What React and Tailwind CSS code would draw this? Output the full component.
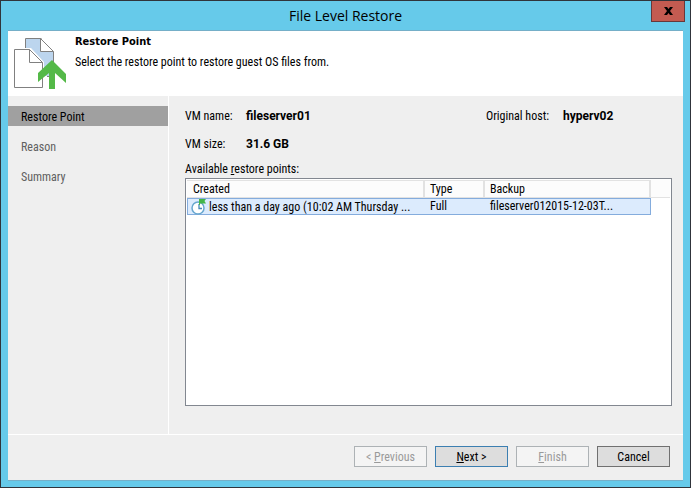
import React from "react";

const steps = ["Restore Point", "Reason", "Summary"];

const restorePoints = [
  {
    created: "less than a day ago (10:02 AM Thursday ...",
    type: "Full",
    backup: "fileserver012015-12-03T...",
  },
];

const buttons = [
  { before: "< ", hotkey: "P", after: "revious", disabled: true },
  { before: "", hotkey: "N", after: "ext >", primary: true },
  { before: "", hotkey: "F", after: "inish", disabled: true },
  { before: "Cancel", hotkey: "", after: "" },
];

const RestoreIcon = () => (
  <svg width="54" height="54" viewBox="0 0 54 54" className="shrink-0" aria-hidden="true">
    {/* Back page */}
    <path d="M12 1h15l12 13v24H12z" fill="#bcd5ee" />
    <path d="M11.5 11V.5h16M39.5 13.5V38.500H33" fill="none" stroke="#808080" />
    <path d="M26.500 .5v13h13z" fill="#fff" stroke="#808080" />
    {/* Front page */}
    <path d="M0 10h17l13 14v28H0z" fill="#fff" />
    <path d="M.5 11.500h15l13 13v25H.5z" fill="#fff" stroke="#808080" />
    <path d="M15.500 11.500v13h13" fill="none" stroke="#808080" />
    <path d="M38 22l14 14v9l-11-10v16h-6V35L24 44v-9z" fill="#54b948" />
  </svg>
);

const ClockIcon = () => (
  <svg width="16" height="16" viewBox="0 0 16 16" className="shrink-0" aria-hidden="true">
    <circle cx="7" cy="9" r="6" fill="#fff" stroke="#68a7cf" strokeWidth="1.500" />
    <path d="M8 5v4.500h3" fill="none" stroke="#4688b8" strokeWidth="1.300" />
    <path d="M8 0h7l-1.500 2L15 4.500H9V6H8z" fill="#43b649" />
  </svg>
);

const headClassName =
  "h-[17px] border-t border-r-2 border-b border-[#e2e2e2] bg-[#fcfcfc] px-[5px] text-left font-normal first:pl-[6px]";
const cellClassName = "h-[17px] border-y border-[#84acdd] bg-[#dcebfd] px-[5px]";
const valueClassName = "font-['Roboto','Liberation_Sans',sans-serif] font-bold";

const App = () => {
  return (
    <div className="flex min-h-screen flex-col border border-[#30343b] bg-[#66caea] px-[7px] pb-[6px] font-['Roboto_Condensed','Roboto','Liberation_Sans',sans-serif] text-[12px] leading-4 text-black">
      <header className="relative flex h-[29px] shrink-0 items-center justify-center">
        <h1 className="font-['Open_Sans','Noto_Sans',sans-serif] text-[14px] leading-5">
          File Level Restore
        </h1>
        <button
          aria-label="Close"
          className="absolute top-0 -right-[2px] flex h-[21px] w-[34px] items-center justify-center border border-t-0 border-[#68373a] bg-[#c35b51]"
        >
          <svg width="9" height="8" viewBox="0 0 9 8" aria-hidden="true">
            <path d="M0 0h3l1.500 2L6 0h3L6 4l3 4H6L4.500 6 3 8H0l3-4z" fill="#000" />
          </svg>
        </button>
      </header>

      <main className="flex grow flex-col border-y border-[#75afc8] bg-[#efefef]">
        <div className="flex h-[65px] shrink-0 gap-[7px] bg-white px-[6px] pt-[7px]">
          <RestoreIcon />
          <div className="-mt-1">
            <h2 className="font-['DejaVu_Sans_Condensed','DejaVu_Sans',sans-serif] text-[11px] leading-4 font-bold">
              Restore Point
            </h2>
            <p className="mt-1">Select the restore point to restore guest OS files from.</p>
          </div>
        </div>

        <div className="flex grow">
          <nav className="w-[161px] shrink-0 border-r border-white pt-[10px]">
            <ol className="flex flex-col gap-[10px]">
              {steps.map((step, index) => (
                <li
                  key={step}
                  aria-current={index === 0 ? "step" : undefined}
                  className={
                    index === 0
                      ? "h-5 bg-[#a0a0a0] px-[13px] pt-[3px]"
                      : "h-5 px-[13px] pt-[3px] text-[#606060]"
                  }
                >
                  {step}
                </li>
              ))}
            </ol>
          </nav>

          <section className="flex min-w-0 grow flex-col pt-3 pr-[11px] pb-7 pl-4">
            <dl className="grid grid-cols-[61px_1fr_77px_109px] gap-y-3">
              <dt>VM name:</dt>
              <dd className={valueClassName}>fileserver01</dd>
              <dt>Original host:</dt>
              <dd className={valueClassName}>hyperv02</dd>
              <dt>VM size:</dt>
              <dd className={valueClassName}>31.6 GB</dd>
            </dl>
            <h3 id="points" className="mt-[9px]">
              Available <u>r</u>estore points:
            </h3>
            <div className="mt-px grow border border-[#828790] bg-white p-px">
              <table aria-labelledby="points" className="w-full table-fixed border-separate border-spacing-0">
                <colgroup>
                  <col className="w-[238px]" />
                  <col className="w-[60px]" />
                  <col className="w-[166px]" />
                  <col />
                </colgroup>
                <thead>
                  <tr>
                    <th className={headClassName}>Created</th>
                    <th className={headClassName}>Type</th>
                    <th className={headClassName}>Backup</th>
                    <td className="border-b border-[#e2e2e2] bg-[#fcfcfc]" />
                  </tr>
                </thead>
                <tbody>
                  {restorePoints.map((point) => (
                    <tr key={point.created}>
                      <td className="h-[17px] border-y border-l border-[#84acdd] bg-[#dcebfd] pl-[3px]">
                        <div className="flex h-[15px] items-center gap-[2px] whitespace-nowrap">
                          <ClockIcon />
                          {point.created}
                        </div>
                      </td>
                      <td className={cellClassName}>
                        <div className="h-[15px] leading-[15px]">{point.type}</div>
                      </td>
                      <td className={cellClassName + " border-r"}>
                        <div className="h-[15px] leading-[15px] whitespace-nowrap">{point.backup}</div>
                      </td>
                      <td />
                    </tr>
                  ))}
                </tbody>
              </table>
            </div>
          </section>
        </div>

        <footer className="flex h-[46px] shrink-0 justify-end gap-2 border-t border-white pt-[11px] pr-[13px]">
          {buttons.map((button) => (
            <button
              key={button.before + button.hotkey}
              disabled={button.disabled}
              className={
                button.disabled
                  ? "h-[21px] w-[73px] border border-[#adb2b5] bg-[#f4f4f4] text-[#9a9a9a]"
                  : button.primary
                    ? "h-[21px] w-[73px] border border-[#3c7fb1] bg-[#dddddd]"
                    : "h-[21px] w-[73px] border border-[#707070] bg-[#dddddd]"
              }
            >
              {button.before}
              <u>{button.hotkey}</u>
              {button.after}
            </button>
          ))}
        </footer>
      </main>
    </div>
  );
};

export default App;
